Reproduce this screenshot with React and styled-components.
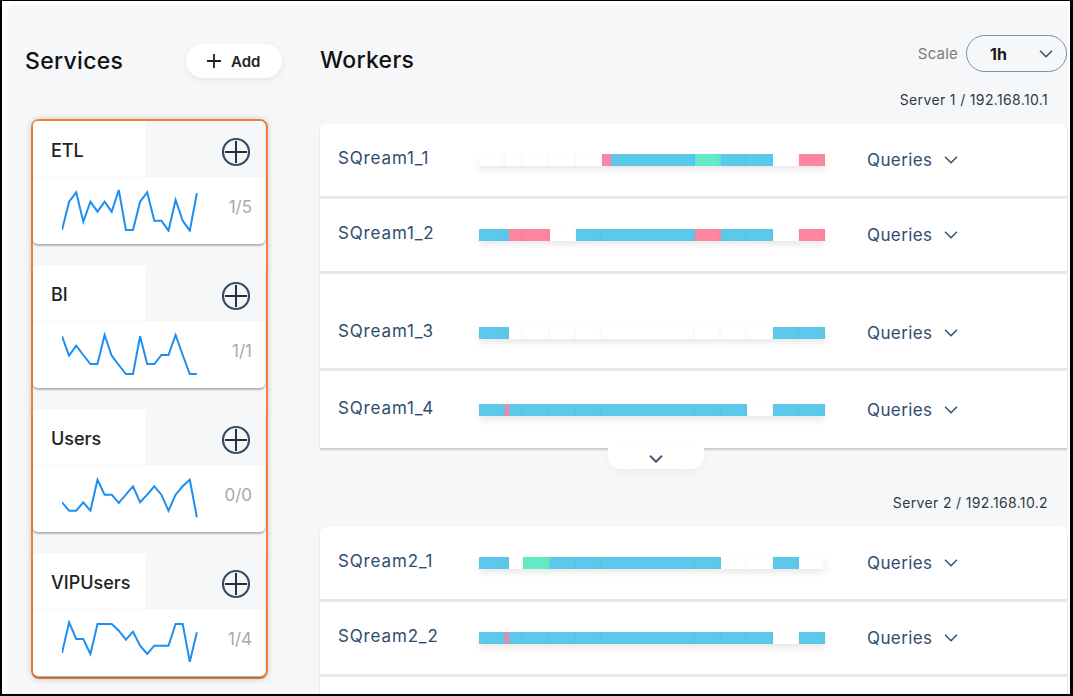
import React from "react";
import styled, { createGlobalStyle } from "styled-components";
import { ChevronDown } from "lucide-react";

const GlobalStyle = createGlobalStyle`
  html, body { margin: 0; padding: 0; background: #fff; }
  body { font-family: "Inter", "Noto Sans", sans-serif; color: #111; }
  * { box-sizing: border-box; }
`;

const C = {
  b: "#5dc9ea",
  p: "#ff86a0",
  g: "#62e9c5",
  w: "#ffffff",
};

const services = [
  { name: "ETL", count: "1/5", data: [41, 12.7, 3.3, 32.7, 12.7, 22.7, 12.7, 22.7, 1, 41, 41, 12.7, 3.3, 31.7, 31.7, 41.7, 11, 31.7, 41.7, 4.3] },
  { name: "BI", count: "1/1", data: [3.3, 22.7, 12.7, 22, 31, 31, 2, 22.7, 32, 41, 41, 3.3, 31, 31, 22, 22, 2, 22, 41, 41] },
  { name: "Users", count: "0/0", data: [25.3, 33.7, 33.7, 25.3, 33.7, 2.7, 17.7, 17.7, 26, 17.7, 9.3, 25.3, 17.7, 9.3, 17.7, 33.7, 17.7, 9.3, 2.7, 40.3] },
  { name: "VIPUsers", count: "1/4", data: [32, 1.3, 18, 18, 33, 3, 3, 3, 9.7, 18.7, 10.7, 24.7, 33, 24.7, 24.7, 24.7, 3, 3, 40.7, 11.3] },
];

const servers = [
  {
    label: "Server 1 / 192.168.10.1",
    workers: [
      { name: "SQream1_1", segs: [[26, "w"], [18, "w"], [27, "w"], [26, "w"], [26, "w"], [9, "p"], [84, "b"], [26, "g"], [26, "b"], [26, "b"], [26, "w"], [26, "p"]] },
      { name: "SQream1_2", segs: [[26, "b"], [4, "b"], [14, "p"], [27, "p"], [26, "w"], [26, "b"], [93, "b"], [26, "p"], [26, "b"], [26, "b"], [26, "w"], [26, "p"]] },
      { name: "SQream1_3", tall: true, segs: [[26, "b"], [4, "b"], [14, "w"], [27, "w"], [26, "w"], [26, "w"], [93, "w"], [26, "w"], [26, "w"], [26, "w"], [26, "b"], [26, "b"]] },
      { name: "SQream1_4", segs: [[26, "b"], [4, "p"], [14, "b"], [27, "b"], [26, "b"], [26, "b"], [93, "b"], [26, "b"], [26, "b"], [26, "w"], [26, "b"], [26, "b"]] },
    ],
  },
  {
    label: "Server 2 / 192.168.10.2",
    workers: [
      { name: "SQream2_1", segs: [[26, "b"], [4, "b"], [14, "w"], [27, "g"], [26, "b"], [26, "b"], [93, "b"], [26, "b"], [26, "w"], [26, "w"], [26, "b"], [26, "w"]] },
      { name: "SQream2_2", segs: [[26, "b"], [4, "p"], [14, "b"], [27, "b"], [26, "b"], [26, "b"], [93, "b"], [26, "b"], [26, "b"], [26, "b"], [26, "w"], [26, "b"]] },
      { name: "", empty: true, segs: [] },
    ],
  },
];

const Frame = styled.div`
  width: 1073px;
  height: 696px;
  border-style: solid;
  border-color: #000;
  border-width: 1px 3px 2px 2px;
  padding: 4px 2px 0 5px;
  background: #fff;
  overflow: hidden;
`;

const Panel = styled.div`
  display: flex;
  height: 100%;
  background: #f6f7f9;
  border-radius: 7px 0 0 0;
  overflow: hidden;
`;

const ServicesColumn = styled.section`
  width: 313px;
  flex-shrink: 0;
  padding: 39px 38px 0 18px;
  display: flex;
  flex-direction: column;
`;

const ColumnHeader = styled.div`
  display: flex;
  align-items: center;
  justify-content: space-between;
  height: 34px;
`;

const Title = styled.h2`
  margin: 0;
  font-size: 23px;
  font-weight: 500;
  line-height: 26px;
  color: #111;
  letter-spacing: 0.3px;
`;

const AddButton = styled.button`
  display: flex;
  align-items: center;
  gap: 10px;
  width: 96px;
  height: 34px;
  padding: 0 0 0 21px;
  border: none;
  border-radius: 17px;
  background: #fff;
  box-shadow: 0 2px 6px rgba(0, 0, 0, 0.08);
  font-family: inherit;
  font-size: 15px;
  font-weight: 600;
  color: #222;
`;

const ServiceList = styled.div`
  margin: 41px 0 0 6px;
  width: 237px;
  border: 2px solid #ef8233;
  border-radius: 8px;
  padding: 0 1px 1px 0;
  display: flex;
  flex-direction: column;
  gap: 21px;
  box-shadow: 0 0 6px rgba(0, 0, 0, 0.18);
`;

const Card = styled.div`
  height: 123px;
  background: #fff;
  border-radius: 5px;
  box-shadow: 0 2px 2px rgba(0, 0, 0, 0.28);
  overflow: hidden;
  display: flex;
  flex-direction: column;
`;

const CardHeader = styled.div`
  height: 56px;
  display: flex;
  align-items: stretch;
  justify-content: space-between;
  background: #f6f7f9;
`;

const NameTab = styled.div`
  width: 113px;
  background: #fff;
  border-radius: 0 0 4px 0;
  box-shadow: 0 1px 2px rgba(0, 0, 0, 0.04);
  display: flex;
  align-items: center;
  padding: 3px 0 0 18px;
  font-size: 18px;
  font-weight: 500;
  color: #222;
`;

const PlusButton = styled.div`
  display: flex;
  align-items: center;
  padding: 6px 14px 0 0;
`;

const CardBody = styled.div`
  flex: 1;
  display: flex;
  align-items: flex-start;
  justify-content: space-between;
  padding: 11px 13px 0 29px;
`;

const Count = styled.span`
  margin-top: 9px;
  font-size: 17px;
  color: #a8a8a8;
`;

const WorkersColumn = styled.section`
  flex: 1;
  padding: 29px 1px 0 0;
  display: flex;
  flex-direction: column;
`;

const WorkersHeader = styled.div`
  display: flex;
  align-items: flex-start;
  justify-content: space-between;
`;

const WorkersTitle = styled(Title)`
  margin-top: 13px;
`;

const ScaleControl = styled.div`
  display: flex;
  align-items: center;
  gap: 8px;
`;

const ScaleLabel = styled.span`
  font-size: 15px;
  color: #7a7a7a;
  margin-top: 1px;
  letter-spacing: 0.2px;
`;

const Select = styled.div`
  width: 101px;
  height: 37px;
  margin-top: 1px;
  border: 1px solid #7d8fa6;
  border-radius: 19px;
  display: flex;
  align-items: center;
  justify-content: space-between;
  padding: 0 9px 0 23px;
  font-size: 16px;
  font-weight: 700;
  color: #1a1a1a;
`;

const ServerLabel = styled.div`
  margin: ${(p) => p.$top}px 19px 16px 0;
  text-align: right;
  font-size: 14px;
  line-height: 16px;
  color: #2f3a48;
  letter-spacing: 0.35px;
`;

const WorkerPanel = styled.div`
  background: #fff;
  border-radius: 6px 6px 0 0;
  box-shadow: 0 2px 2px rgba(0, 0, 0, 0.18);
  display: flex;
  flex-direction: column;
`;

const Row = styled.div`
  display: grid;
  grid-template-columns: 141px 346px auto;
  align-items: center;
  height: ${(p) => (p.$tall ? 97 : 75)}px;
  padding: ${(p) => (p.$tall ? 24 : 0)}px 0 0 18px;
  border-bottom: 3px solid #e6e9ea;
  &:last-child {
    border-bottom: none;
    height: ${(p) => (p.$tall ? 99 : 77)}px;
  }
`;

const WorkerName = styled.span`
  font-size: 17px;
  color: #2f4d70;
  letter-spacing: 0.85px;
  margin-top: -4px;
`;

const Bar = styled.div`
  display: flex;
  height: 12px;
  box-shadow: 0 4px 7px rgba(0, 0, 0, 0.09);
`;

const Seg = styled.div`
  flex: 0 0 auto;
  height: 100%;
  background: ${(p) => C[p.$c]};
  box-shadow: inset -5px 0 5px -5px rgba(0, 0, 0, 0.07);
`;

const Queries = styled.div`
  display: flex;
  align-items: center;
  gap: 8px;
  margin-left: 42px;
  font-size: 17px;
  color: #2f4d70;
  letter-spacing: 0.4px;
`;

const ExpandTab = styled.div`
  width: 96px;
  height: 21px;
  margin-left: 288px;
  background: #fff;
  border-radius: 0 0 12px 12px;
  box-shadow: 0 4px 10px rgba(0, 0, 0, 0.04);
  display: flex;
  align-items: center;
  justify-content: center;
  color: #3d5775;
`;

function PlusIcon() {
  return (
    <svg width="14" height="14" viewBox="0 0 14 14">
      <line x1="0" y1="7" x2="14" y2="7" stroke="#222" strokeWidth="1.8" />
      <line x1="7" y1="0" x2="7" y2="14" stroke="#222" strokeWidth="1.8" />
    </svg>
  );
}

function PlusCircle() {
  return (
    <svg width="30" height="30" viewBox="0 0 30 30">
      <circle cx="15" cy="15" r="13" fill="none" stroke="#3a4c60" strokeWidth="2.2" />
      <line x1="4" y1="15" x2="26" y2="15" stroke="#1f3047" strokeWidth="2" />
      <line x1="15" y1="4" x2="15" y2="26" stroke="#1f3047" strokeWidth="2" />
    </svg>
  );
}

function Sparkline({ data }) {
  const pts = data.map((y, i) => `${(i * 7.1).toFixed(1)},${(y + 1).toFixed(1)}`).join(" ");
  return (
    <svg width="137" height="44" viewBox="0 0 137 44">
      <polyline points={pts} fill="none" stroke="#1e8ff0" strokeWidth="2" strokeLinejoin="miter" />
    </svg>
  );
}

function WorkerRow({ w }) {
  if (w.empty) return <Row />;
  return (
    <Row $tall={w.tall}>
      <WorkerName>{w.name}</WorkerName>
      <Bar>
        {w.segs.map(([width, c], i) => (
          <Seg key={i} $c={c} style={{ width }} />
        ))}
      </Bar>
      <Queries>
        Queries <ChevronDown size={22} strokeWidth={1.8} color="#3d5775" />
      </Queries>
    </Row>
  );
}

export default function App() {
  return (
    <>
      <GlobalStyle />
      <Frame>
        <Panel>
          <ServicesColumn>
            <ColumnHeader>
              <Title>Services</Title>
              <AddButton>
                <PlusIcon />
                Add
              </AddButton>
            </ColumnHeader>
            <ServiceList>
              {services.map((s) => (
                <Card key={s.name}>
                  <CardHeader>
                    <NameTab>{s.name}</NameTab>
                    <PlusButton>
                      <PlusCircle />
                    </PlusButton>
                  </CardHeader>
                  <CardBody>
                    <Sparkline data={s.data} />
                    <Count>{s.count}</Count>
                  </CardBody>
                </Card>
              ))}
            </ServiceList>
          </ServicesColumn>
          <WorkersColumn>
            <WorkersHeader>
              <WorkersTitle>Workers</WorkersTitle>
              <ScaleControl>
                <ScaleLabel>Scale</ScaleLabel>
                <Select>
                  1h
                  <ChevronDown size={22} strokeWidth={1.8} color="#3d5775" />
                </Select>
              </ScaleControl>
            </WorkersHeader>
            <ServerLabel $top={19}>{servers[0].label}</ServerLabel>
            <WorkerPanel>
              {servers[0].workers.map((w) => (
                <WorkerRow key={w.name} w={w} />
              ))}
            </WorkerPanel>
            <ExpandTab>
              <ChevronDown size={22} strokeWidth={2} />
            </ExpandTab>
            <ServerLabel $top={26}>{servers[1].label}</ServerLabel>
            <WorkerPanel>
              {servers[1].workers.map((w, i) => (
                <WorkerRow key={i} w={w} />
              ))}
            </WorkerPanel>
          </WorkersColumn>
        </Panel>
      </Frame>
    </>
  );
}
